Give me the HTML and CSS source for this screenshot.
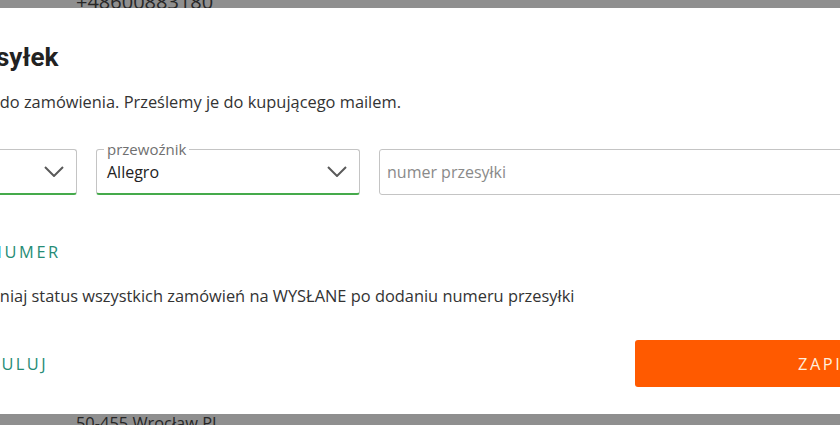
FILE: index.html
```html
<!DOCTYPE html>
<html lang="pl">
<head>
<meta charset="utf-8">
<title>Numery przesyłek</title>
<link rel="stylesheet" href="styles.css">
</head>
<body>
<div class="page">
  <div class="page-phone">+48600883180</div>
  <div class="page-address">50-455 Wrocław PL</div>
</div>
<div class="overlay"></div>
<div class="modal" role="dialog">
  <div class="header">
    <h2 class="title">Numery przesyłek</h2>
  </div>
  <p class="lead">Dodaj numery przesyłek do zamówienia. Prześlemy je do kupującego mailem.</p>
  <div class="fields">
    <div class="field select select-wide">
      <span class="label">paczka</span>
      <span class="value">Paczka 1</span>
      <svg class="chevron" width="20" height="11" viewBox="0 0 20 11"><polyline points="1,1 10,10 19,1" fill="none" stroke="#5a5a5a" stroke-width="2"/></svg>
    </div>
    <div class="field select select-carrier">
      <span class="label">przewoźnik</span>
      <span class="value">Allegro</span>
      <svg class="chevron" width="20" height="11" viewBox="0 0 20 11"><polyline points="1,1 10,10 19,1" fill="none" stroke="#5a5a5a" stroke-width="2"/></svg>
    </div>
    <input class="field tracking" type="text" placeholder="numer przesyłki">
  </div>
  <button class="add" type="button">DODAJ KOLEJNY NUMER</button>
  <label class="check">
    <span class="box"></span>
    <span>Automatycznie zmieniaj status wszystkich zamówień na WYSŁANE po dodaniu numeru przesyłki</span>
  </label>
  <div class="footer">
    <button class="cancel" type="button">ANULUJ</button>
    <button class="save" type="button">ZAPISZ</button>
  </div>
</div>
</body>
</html>
```

FILE: styles.css
```css
* { box-sizing: border-box; }

html, body {
  margin: 0;
  width: 840px;
  height: 425px;
  overflow: hidden;
}

body {
  position: relative;
  font-family: "Open Sans", "DejaVu Sans", sans-serif;
  background: #fff;
}

.page {
  margin-top: -10px;
  padding-left: 76px;
  color: #474747;
}

.page-phone {
  font-size: 20px;
  line-height: 24px;
}

.page-address {
  margin-top: 399px;
  font-size: 16.4px;
  line-height: 20px;
}

.overlay {
  position: fixed;
  inset: 0;
  background: rgba(0, 0, 0, 0.44);
}

.modal {
  position: absolute;
  top: 8px;
  left: -221px;
  width: 1282px;
  height: 406px;
  padding: 34px 32px 27px;
  background: #fff;
}

.header {
  padding-left: 35px;
}

.title {
  margin: 0;
  font-family: Roboto, "Liberation Sans", sans-serif;
  font-weight: 700;
  font-size: 26px;
  line-height: 30px;
  color: #222;
}

.lead {
  margin: 19px 0 0;
  font-size: 16.4px;
  line-height: 22px;
  color: #333;
}

.fields {
  display: flex;
  gap: 19px;
  margin-top: 36px;
  height: 46px;
}

.field {
  position: relative;
  height: 46px;
  border: 1px solid #c4c4c4;
  border-radius: 3px;
  background: #fff;
}

.select {
  display: flex;
  align-items: center;
  justify-content: space-between;
  padding: 0 12px 0 10px;
  border-bottom: 2px solid #45aa4b;
}

.select-wide { width: 266px; }
.select-carrier { width: 264px; }

.label {
  position: absolute;
  top: -10px;
  left: 7px;
  padding: 0 3px;
  background: #fff;
  font-size: 15px;
  line-height: 18px;
  color: #707070;
}

.value {
  font-size: 16px;
  color: #222;
}

.chevron { display: block; }

.tracking {
  flex: 1;
  padding: 0 7px;
  font-family: "Open Sans", sans-serif;
  font-size: 16px;
  color: #222;
  outline: none;
}

.tracking::placeholder {
  color: #8a8a8a;
}

.add {
  display: block;
  margin-top: 46px;
  padding: 0 16px;
  border: 0;
  background: none;
  font-family: "Open Sans", sans-serif;
  font-size: 16.4px;
  line-height: 22px;
  letter-spacing: 2.6px;
  color: #268c76;
}

.check {
  display: flex;
  align-items: center;
  gap: 15px;
  margin-top: 22px;
  font-size: 16.4px;
  line-height: 22px;
  color: #333;
}

.box {
  width: 20px;
  height: 20px;
  border: 2px solid #767676;
  border-radius: 2px;
  flex: none;
}

.footer {
  display: flex;
  justify-content: space-between;
  align-items: center;
  margin-top: 33px;
}

.cancel {
  width: 400px;
  height: 47px;
  padding: 0;
  border: 0;
  background: none;
  font-family: "Open Sans", sans-serif;
  font-size: 16.4px;
  letter-spacing: 2.4px;
  color: #268c76;
}

.save {
  width: 394px;
  height: 47px;
  padding: 0;
  border: 0;
  border-radius: 3px;
  background: #ff5a00;
  font-family: "Open Sans", sans-serif;
  font-size: 16.4px;
  letter-spacing: 2.6px;
  color: #ffeedd;
}
```
